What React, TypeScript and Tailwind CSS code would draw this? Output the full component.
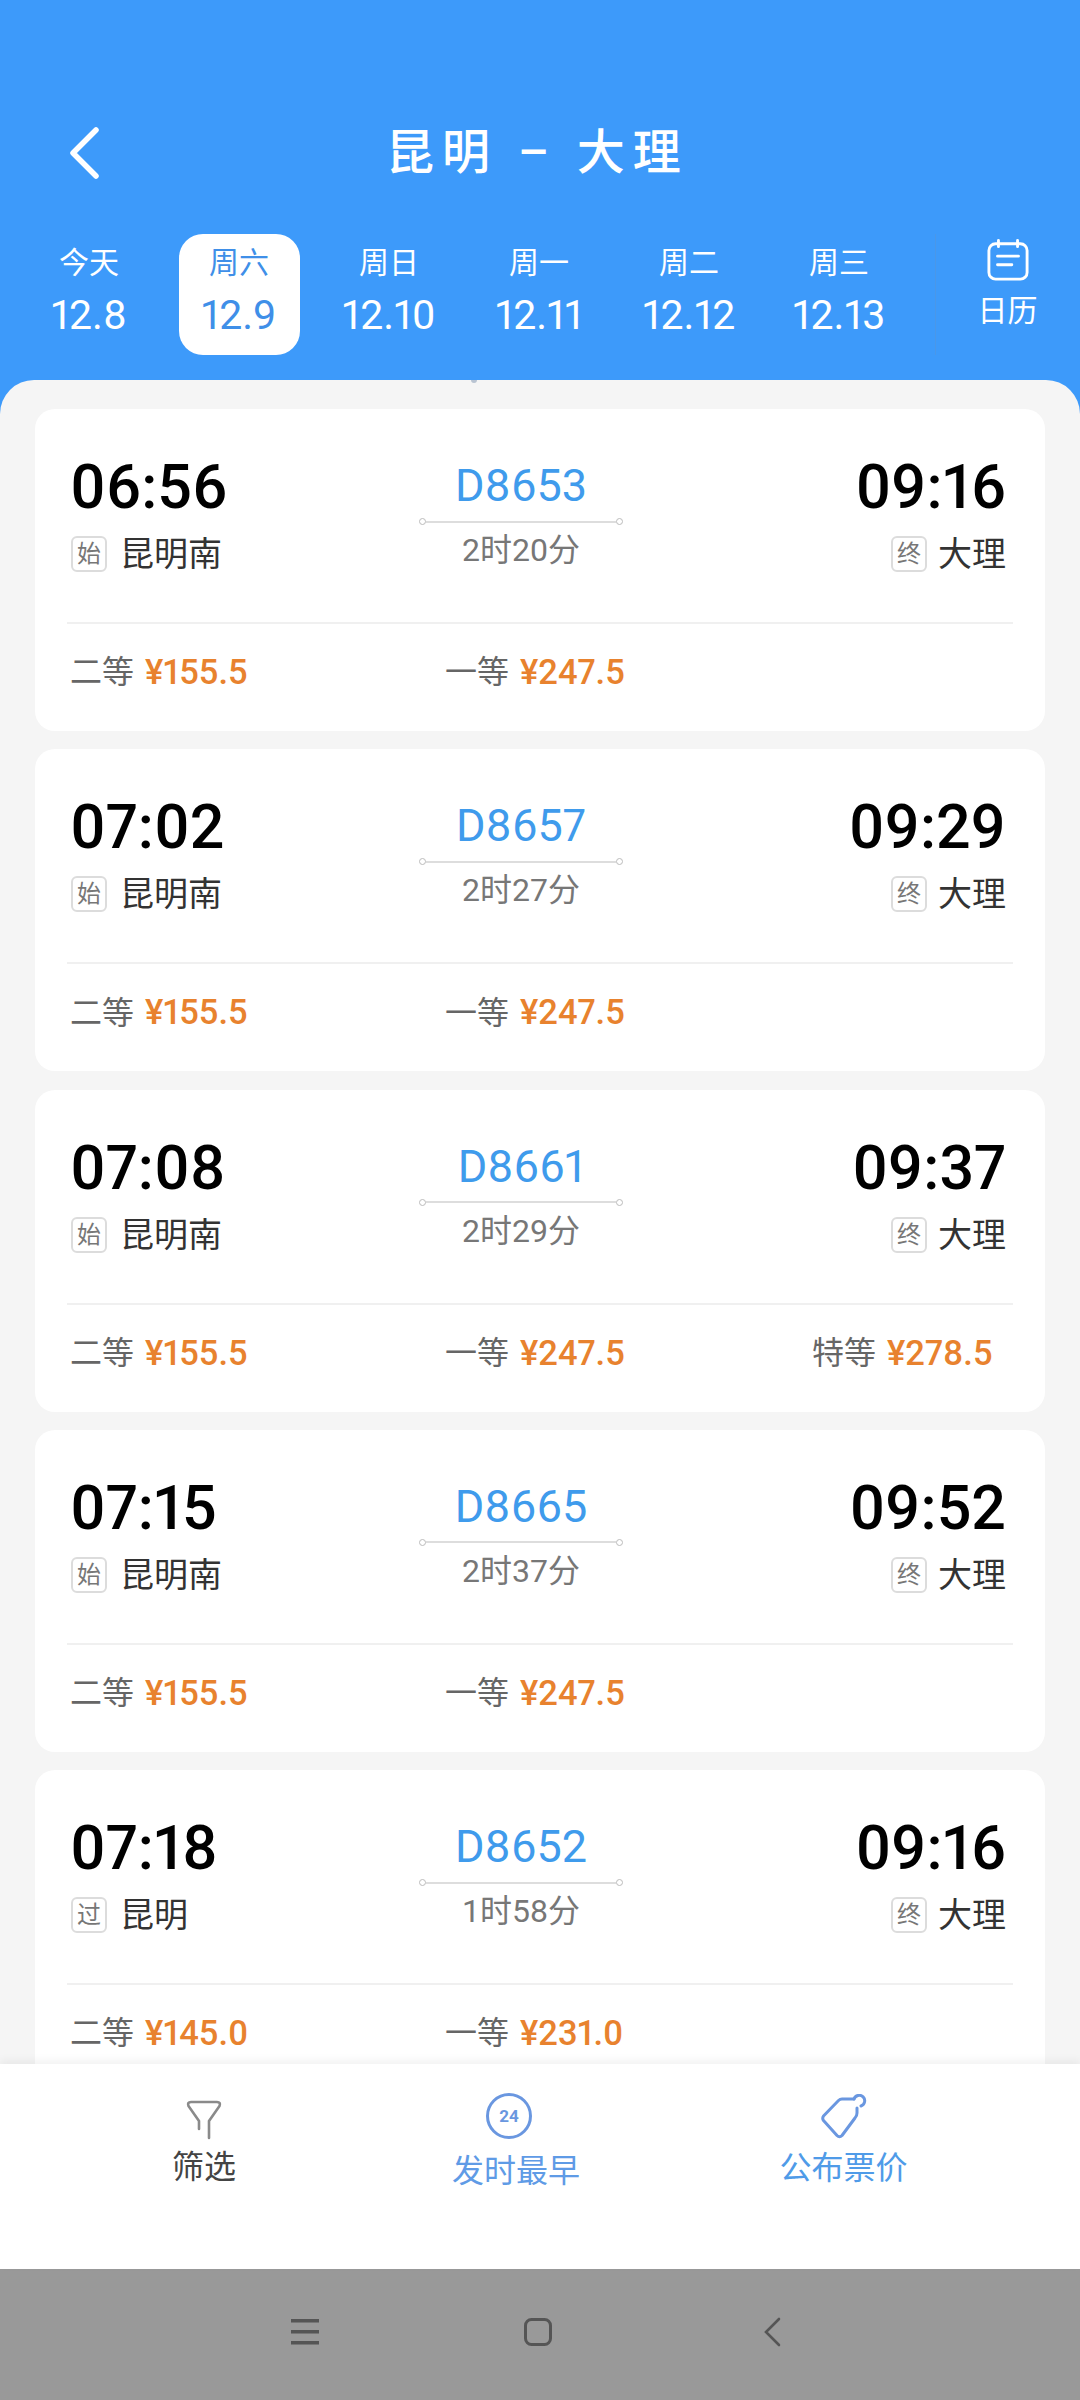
const cjk = { fontFamily: '"Roboto", "Noto Sans CJK SC", sans-serif' };

const days = [
  { week: "今天", date: "12.8" },
  { week: "周六", date: "12.9", active: true },
  { week: "周日", date: "12.10" },
  { week: "周一", date: "12.11" },
  { week: "周二", date: "12.12" },
  { week: "周三", date: "12.13" },
];

type Train = {
  from: string;
  to: string;
  no: string;
  cost: string;
  tag: string;
  station: string;
  second: string;
  first: string;
  special?: string;
};

const trains: Train[] = [
  { from: "06:56", to: "09:16", no: "D8653", cost: "2时20分", tag: "始", station: "昆明南", second: "¥155.5", first: "¥247.5" },
  { from: "07:02", to: "09:29", no: "D8657", cost: "2时27分", tag: "始", station: "昆明南", second: "¥155.5", first: "¥247.5" },
  { from: "07:08", to: "09:37", no: "D8661", cost: "2时29分", tag: "始", station: "昆明南", second: "¥155.5", first: "¥247.5", special: "¥278.5" },
  { from: "07:15", to: "09:52", no: "D8665", cost: "2时37分", tag: "始", station: "昆明南", second: "¥155.5", first: "¥247.5" },
  { from: "07:18", to: "09:16", no: "D8652", cost: "1时58分", tag: "过", station: "昆明", second: "¥145.0", first: "¥231.0" },
];

function Tag({ text }: { text: string }) {
  return (
    <span className="flex h-[36px] w-[36px] items-center justify-center rounded-[6px] border-2 border-[#dcdcdc] text-[24px] leading-none text-[#777]">
      {text}
    </span>
  );
}

function Seat({ label, price, width }: { label: string; price: string; width: string }) {
  return (
    <div className={`flex items-center gap-[11px] ${width}`}>
      <span className="text-[32px] leading-none text-[#666]">{label}</span>
      <span className="text-[34.5px] leading-none font-medium text-[#e8822e] proportional-nums">{price}</span>
    </div>
  );
}

function TrainCard({ t }: { t: Train }) {
  return (
    <div className="h-[322px] shrink-0 rounded-[20px] bg-white px-[32px]">
      <div className="flex h-[215px] border-b-2 border-[#f0f0f0] pr-[7px] pl-[3px]">
        <div className="w-[349px] pt-[41px]">
          <div className="text-[61px] leading-[74px] font-medium text-black proportional-nums">{t.from}</div>
          <div className="mt-[8px] flex items-center gap-[13px] pl-[1px]">
            <Tag text={t.tag} />
            <span className="text-[34px] leading-[44px] text-[#333]">{t.station}</span>
          </div>
        </div>
        <div className="flex w-[204px] flex-col items-center pt-[52px]">
          <div className="text-[45px] leading-[50px] text-[#3f9bec] proportional-nums">{t.no}</div>
          <div className="mt-[7px] flex w-full items-center">
            <span className="h-[7px] w-[7px] rounded-full border border-[#bbb]" />
            <span className="h-[2px] flex-1 bg-[#ddd]" />
            <span className="h-[7px] w-[7px] rounded-full border border-[#bbb]" />
          </div>
          <div className="mt-[5px] text-[32px] leading-[40px] text-[#777]">{t.cost}</div>
        </div>
        <div className="flex flex-1 flex-col items-end pt-[41px]">
          <div className="text-[61px] leading-[74px] font-medium text-black proportional-nums">{t.to}</div>
          <div className="mt-[8px] flex items-center gap-[11px]">
            <Tag text="终" />
            <span className="text-[34px] leading-[44px] text-[#333]">大理</span>
          </div>
        </div>
      </div>
      <div className="flex items-center pt-[31px] pl-[3px]">
        <Seat label="二等" price={t.second} width="w-[375px]" />
        <Seat label="一等" price={t.first} width="w-[367px]" />
        {t.special && <Seat label="特等" price={t.special} width="w-[200px]" />}
      </div>
    </div>
  );
}

export default function App() {
  return (
    <div className="flex h-[2400px] w-[1080px] flex-col overflow-hidden bg-[#3d9afa]" style={cjk}>
      <header className="h-[380px] shrink-0 text-white">
        <div className="flex items-center pt-[127px]">
          <svg className="ml-[68px] h-[52px] w-[32px]" viewBox="0 0 32 52" fill="none" stroke="white" strokeWidth="5.5" strokeLinecap="round" strokeLinejoin="round">
            <path d="M28 3 L5 26 L28 49" />
          </svg>
          <h1 className="ml-[286px] text-[48px] leading-[52px] font-medium tracking-[8px] whitespace-nowrap">昆明 – 大理</h1>
        </div>
        <div className="mt-[55px] flex pl-[14px]">
          {days.map((d) => (
            <div key={d.date} className="flex w-[150px] justify-center">
              <div
                className={`flex h-[121px] w-[121px] flex-col items-center pt-[9px] ${
                  d.active ? "rounded-[24px] bg-white text-[#3f8fe8]" : ""
                }`}
              >
                <span className="text-[30px] leading-[40px]">{d.week}</span>
                <span className="mt-[8px] text-[41px] leading-[48px] proportional-nums">{d.date}</span>
              </div>
            </div>
          ))}
          <div className="ml-[21px] flex flex-1 flex-col items-center border-l border-[#4a97e8] pr-[1px]">
            <svg className="mt-[5px] h-[42px] w-[42px]" viewBox="0 0 44 44" fill="none" stroke="white" strokeWidth="3" strokeLinecap="round">
              <rect x="2" y="5" width="40" height="37" rx="7" />
              <path d="M12 1.5 V8 M32 1.5 V8 M11 18 H33 M11 27 H26" />
            </svg>
            <span className="mt-[10px] text-[30px] leading-[40px]">日历</span>
          </div>
        </div>
      </header>

      <main className="relative flex min-h-0 flex-1 flex-col gap-[18.3px] overflow-hidden rounded-t-[34px] bg-[#f5f5f5] px-[35px] pt-[29px]">
        <span className="absolute top-0 left-[471px] h-[3px] w-[6px] rounded-b-full bg-[#b9c4d2]" />
        {trains.map((t) => (
          <TrainCard key={t.no} t={t} />
        ))}
      </main>

      <div className="relative flex h-[205px] shrink-0 bg-white shadow-[0_-4px_8px_rgba(0,0,0,0.05)]">
        <div className="flex w-[408px] flex-col items-center pt-[36px]">
          <svg className="h-[40px] w-[36px]" viewBox="0 0 36 40" fill="none" stroke="#8a8a8a" strokeWidth="2.6" strokeLinecap="round" strokeLinejoin="round">
            <path d="M13 29 V21 L2.5 6 Q1 2 5 2 H31 Q35 2 33.5 6 L23 21 V38" />
          </svg>
          <span className="mt-[7px] text-[32px] leading-[40px] text-[#444]">筛选</span>
        </div>
        <div className="flex w-[216px] flex-col items-center pt-[28px]">
          <svg className="mr-[14px] h-[48px] w-[48px]" viewBox="0 0 48 48" fill="none">
            <circle cx="24" cy="24" r="21.5" stroke="#6a97e0" strokeWidth="3" />
            <text x="24" y="30" textAnchor="middle" fontSize="17" fontWeight="700" fill="#6a97e0" fontFamily="Roboto, sans-serif">24</text>
          </svg>
          <span className="mt-[8px] text-[32px] leading-[46px] text-[#5f9be6]">发时最早</span>
        </div>
        <div className="flex flex-1 flex-col items-center pt-[30px] pr-[17px]">
          <svg className="h-[46px] w-[46px]" viewBox="0 0 46 46" fill="none" stroke="#6a97e0" strokeWidth="3" strokeLinecap="round" strokeLinejoin="round">
            <path d="M33 5 H21 Q19 5 17.5 6.5 L2.5 22 Q1 24.5 2.5 26.5 L16 41.5 Q18.5 44 21 41.5 L34 24 Q36 22 36 19 V14" />
            <path d="M33 5 A5.5 5.5 0 1 1 40 12" />
          </svg>
          <span className="mt-[6px] text-[32px] leading-[44px] text-[#4f9be8]">公布票价</span>
        </div>
      </div>

      <nav className="flex h-[131px] shrink-0 items-center bg-[#999999] pb-[5px]">
        <svg className="ml-[291px] h-[26px] w-[28px]" viewBox="0 0 28 26" fill="#555">
          <rect y="0" width="28" height="3.5" />
          <rect y="11" width="28" height="3.5" />
          <rect y="22" width="28" height="3.5" />
        </svg>
        <svg className="ml-[205px] h-[28px] w-[28px]" viewBox="0 0 28 28" fill="none" stroke="#555" strokeWidth="3">
          <rect x="1.5" y="1.5" width="25" height="25" rx="6" />
        </svg>
        <svg className="ml-[211px] h-[30px] w-[18px]" viewBox="0 0 18 30" fill="none" stroke="#555" strokeWidth="2.6" strokeLinecap="round">
          <path d="M16 2 L3 15 L16 28" />
        </svg>
      </nav>
    </div>
  );
}
